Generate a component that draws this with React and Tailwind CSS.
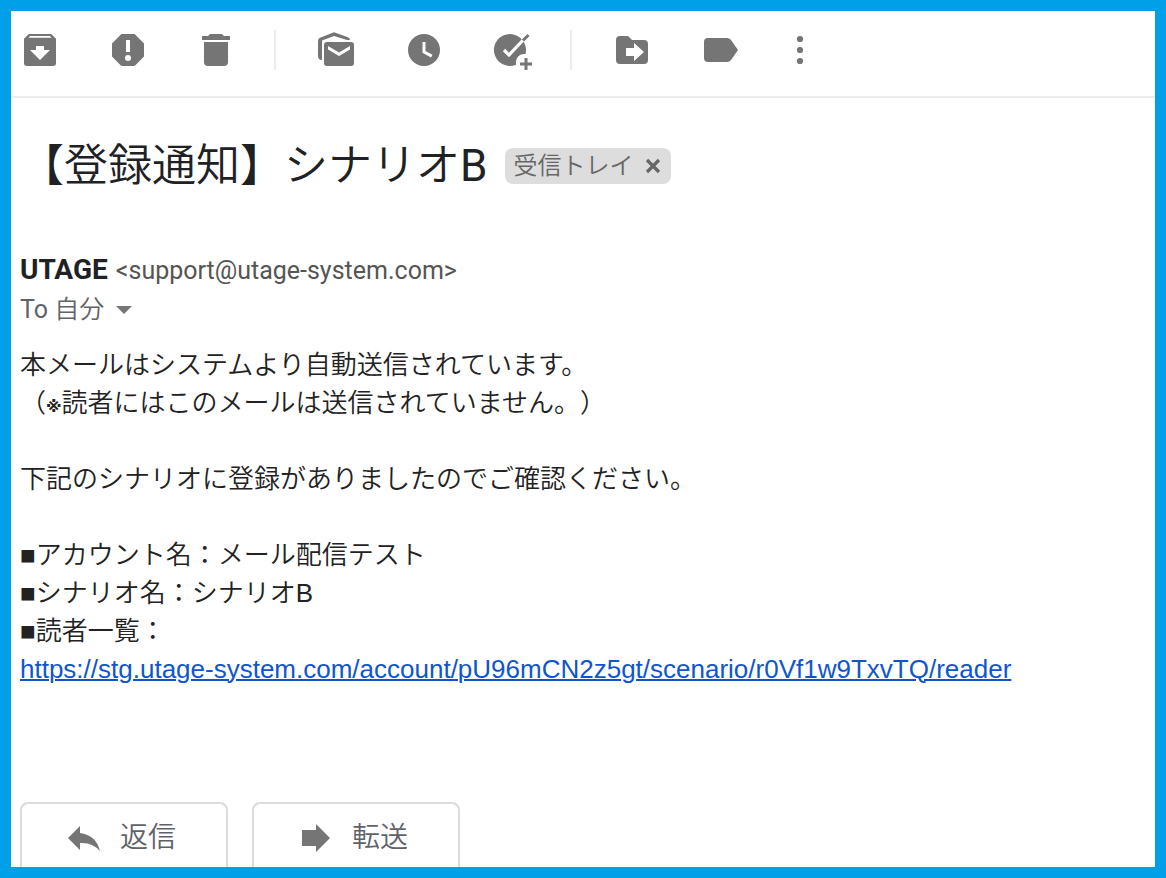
import React from "react";

function Icon({ children, className = "h-10 w-10" }) {
  return (
    <svg viewBox="0 0 40 40" className={className} fill="currentColor" aria-hidden="true">
      {children}
    </svg>
  );
}

function ToolButton({ label, children }) {
  return (
    <button type="button" aria-label={label} className="h-10 w-10 shrink-0 text-[#757575]">
      <Icon>{children}</Icon>
    </button>
  );
}

function Divider() {
  return <div className="ml-[38px] mr-10 h-10 w-[2px] shrink-0 bg-[#ececec]" />;
}

function Toolbar() {
  return (
    <div role="toolbar" className="flex items-center border-b-2 border-[#ececec] pt-[19px] pb-[26px] pl-[9px]">
      <div className="flex gap-12">
        <ToolButton label="アーカイブ">
          <path fillRule="evenodd" d="M8.800 4H31.200L36 8.800V33Q36 36 33 36H7Q4 36 4 33V8.800ZM10 6L8.500 7.800H31.500L30 6ZM16 16H24V20H30L20 30L10 20H16Z" />
        </ToolButton>
        <ToolButton label="迷惑メールを報告">
          <path fillRule="evenodd" d="M13.400 4H26.600L36 13.400V26.600L26.600 36H13.400L4 26.600V13.400ZM18 10V22H22V10ZM20 25A3 3 0 1 0 20 31A3 3 0 1 0 20 25Z" />
        </ToolButton>
        <ToolButton label="削除">
          <path d="M6 6H12L14 4H26L28 6H34V10H6ZM8 12H32V32Q32 36 28 36H12Q8 36 8 32Z" />
        </ToolButton>
      </div>
      <Divider />
      <div className="flex gap-12">
        <ToolButton label="未読にする">
          <path d="M6 30Q2 30 2 26V11Q2 8.800 4 7.700L18 2.200L32 7.300Q34 8.200 34 10H31L18 5.900L6 10.500Z" />
          <path fillRule="evenodd" d="M11 12H35Q38 12 38 15V33Q38 36 35 36H11Q8 36 8 33V15Q8 12 11 12ZM12 16V19.500L23 26L34 19.500V16L23 22.500Z" />
        </ToolButton>
        <ToolButton label="スヌーズ">
          <path fillRule="evenodd" d="M20 4A16 16 0 1 0 20 36A16 16 0 1 0 20 4ZM18.500 12H21.500V21L28.500 24.800L27 27.500L18.500 22.800Z" />
        </ToolButton>
        <ToolButton label="ToDo リストに追加">
          <path d="M18 4A16 16 0 1 0 24 34.800V32A8 8 0 0 1 32 24H33.500A16 16 0 0 0 18 4Z" />
          <path d="M12 20L17 25L34 7" fill="none" stroke="#fff" strokeWidth="3.2" />
          <path d="M31 10.500L36.500 5" fill="none" stroke="currentColor" strokeWidth="3" />
          <path d="M34 28V40M28 34H40" fill="none" stroke="currentColor" strokeWidth="3" />
        </ToolButton>
      </div>
      <Divider />
      <div className="flex gap-12">
        <ToolButton label="移動">
          <path fillRule="evenodd" d="M8 6H16L20 10H32Q36 10 36 14V30Q36 34 32 34H8Q4 34 4 30V10Q4 6 8 6ZM14 18V26H22V31L32 22L22 13V18Z" />
        </ToolButton>
        <ToolButton label="ラベル">
          <path d="M8 8H27Q29.500 8 31 10L38 20L31 30Q29.500 32 27 32H8Q4 32 4 28V12Q4 8 8 8Z" />
        </ToolButton>
      </div>
      <div className="ml-10 flex">
        <ToolButton label="その他">
          <circle cx="20" cy="9" r="3.100" />
          <circle cx="20" cy="20" r="3.100" />
          <circle cx="20" cy="31" r="3.100" />
        </ToolButton>
      </div>
    </div>
  );
}

function ReplyButton({ label, children }) {
  return (
    <button
      type="button"
      className="flex h-[72px] w-52 shrink-0 items-center justify-center gap-4 rounded-lg border-2 border-[#dadce0] pr-2 text-[28px] leading-10 font-[350] text-[#5f6368]"
    >
      <span className="text-[#757575]">
        <Icon>{children}</Icon>
      </span>
      {label}
    </button>
  );
}

export default function App() {
  return (
    <div className="h-screen overflow-hidden border-[11px] border-[#00a0e9] bg-white font-[Roboto,'Noto_Sans_CJK_JP',sans-serif]">
      <Toolbar />
      <main lang="ja" className="px-[9px] pt-10">
        <header className="flex items-center gap-[18px]">
          <h1 className="text-[44px] leading-[56px] font-[350] text-[#202124]">
            【登録通知】シナリオ<span className="font-normal">B</span>
          </h1>
          <div className="flex h-9 items-center gap-[10px] rounded-lg bg-[#ddd] px-2 text-2xl font-[350] text-[#666]">
            <span>受信トレイ</span>
            <button type="button" aria-label="ラベルを削除" className="h-5 w-5">
              <svg viewBox="0 0 20 20" className="h-5 w-5" fill="none" stroke="#666" strokeWidth="3.2" aria-hidden="true">
                <path d="M4 4L16 16M16 4L4 16" />
              </svg>
            </button>
          </div>
        </header>

        <section className="mt-14">
          <div className="flex items-baseline gap-2 leading-10">
            <strong className="text-[28px] font-bold text-[#202124]">UTAGE</strong>
            <span className="text-[25px] text-[#555]">&lt;support@utage-system.com&gt;</span>
          </div>
          <button type="button" className="flex items-center gap-3 text-[25px] leading-[38px] text-[#5f6368]">
            <span>
              To <span className="font-[350]">自分</span>
            </span>
            <svg viewBox="0 0 16 8" className="h-2 w-4" fill="#757575" aria-hidden="true">
              <path d="M0 0H16L8 8Z" />
            </svg>
          </button>
        </section>

        <article className="mt-[17px] font-['Liberation_Sans','Noto_Sans_CJK_JP',sans-serif] text-[26px] leading-[38px] font-[350] text-[#222] [text-spacing-trim:space-all]">
          <p>本メールはシステムより自動送信されています。</p>
          <p>
            （<span className="font-['DejaVu_Sans','Noto_Sans_CJK_JP',sans-serif] text-base leading-none font-bold">※</span>読者にはこのメールは送信されていません。）
          </p>
          <br />
          <p>下記のシナリオに登録がありましたのでご確認ください。</p>
          <br />
          <p>■アカウント名：メール配信テスト</p>
          <p>■シナリオ名：シナリオB</p>
          <p>■読者一覧：</p>
          <p>
            <a
              href="https://stg.utage-system.com/account/pU96mCN2z5gt/scenario/r0Vf1w9TxvTQ/reader"
              className="text-[#1155cc] underline decoration-2"
            >
              https://stg.utage-system.com/account/pU96mCN2z5gt/scenario/r0Vf1w9TxvTQ/reader
            </a>
          </p>
        </article>

        <footer className="mt-[114px] flex gap-6">
          <ReplyButton label="返信">
            <path d="M16 15V8L4 20L16 32V25Q28 24 36 33Q32 17 16 15Z" />
          </ReplyButton>
          <ReplyButton label="転送">
            <path d="M6 12H20V6L34 20L20 34V28H6Z" />
          </ReplyButton>
        </footer>
      </main>
    </div>
  );
}
